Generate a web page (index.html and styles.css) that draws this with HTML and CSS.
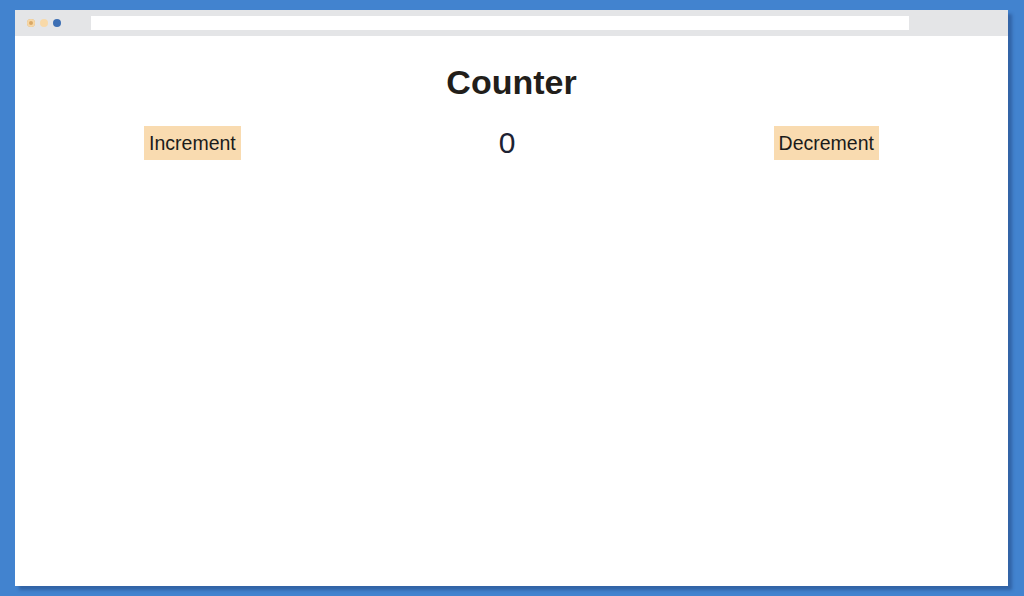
FILE: index.html
```html
<!DOCTYPE html>
<html>
<head>
<meta charset="utf-8">
<link rel="stylesheet" href="styles.css">
</head>
<body>
<div class="window">
  <div class="titlebar">
    <div class="dots">
      <span class="dot dot-a"></span>
      <span class="dot dot-b"></span>
      <span class="dot dot-c"></span>
    </div>
    <div class="address"></div>
  </div>
  <div class="content">
    <h1 class="title">Counter</h1>
    <div class="row">
      <button class="btn">Increment</button>
      <span class="count">0</span>
      <button class="btn">Decrement</button>
    </div>
  </div>
</div>
</body>
</html>
```
FILE: styles.css
```css
html, body {
  margin: 0;
  height: 100%;
}
body {
  background: #4283cf;
  padding: 10px 16px 10px 15px;
  box-sizing: border-box;
  font-family: "Liberation Sans", Arial, sans-serif;
}
.window {
  height: 576px;
  background: #ffffff;
  display: flex;
  flex-direction: column;
  box-shadow: 4px 4px 3px rgba(20, 40, 90, 0.35);
}
.titlebar {
  height: 26px;
  background: #e4e5e7;
  display: flex;
  align-items: center;
  padding: 0 99px 0 12px;
}
.dots {
  display: flex;
  gap: 5px;
  width: 64px;
}
.dot {
  width: 8px;
  height: 8px;
  border-radius: 50%;
}
.dot-a { background: #d9a866; box-shadow: inset 0 0 0 2px #f6d7a6; }
.dot-b { background: #f8d9a8; }
.dot-c { background: #3d6fb4; }
.address {
  flex: 1;
  height: 14px;
  background: #ffffff;
}
.content {
  flex: 1;
}
.title {
  margin: 27px 0 24px;
  text-align: center;
  font-size: 34px;
  font-weight: bold;
  color: #221e1a;
}
.row {
  display: flex;
  justify-content: space-around;
  align-items: center;
}
.btn {
  font-family: "Liberation Sans", Arial, sans-serif;
  font-size: 19.5px;
  color: #1b1b1b;
  background: #f9dbb0;
  border: none;
  padding: 6px 5px;
  height: 34px;
}
.count {
  font-size: 30px;
  color: #1d2233;
}
```
